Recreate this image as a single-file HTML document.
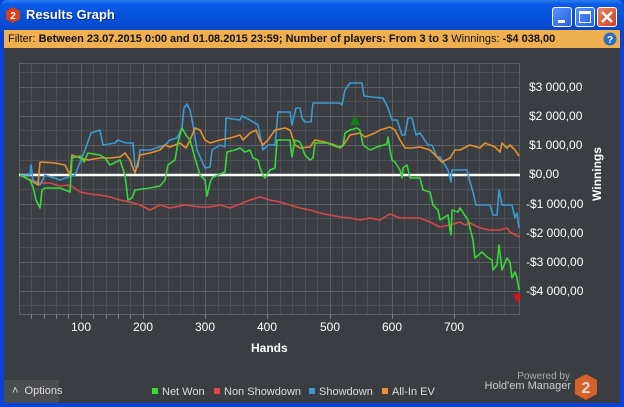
<!DOCTYPE html>
<html><head><meta charset="utf-8"><style>
*{margin:0;padding:0;box-sizing:border-box}
body{width:624px;height:407px;overflow:hidden;background:#0842d8;font-family:"Liberation Sans",sans-serif;position:relative}
.title{position:absolute;left:0;top:0;width:624px;height:30px;background:linear-gradient(#2a7cf0 0%,#0a5ae6 15%,#0450d8 60%,#0746c8 100%);border-radius:7px 7px 0 0}
.title span{position:absolute;left:26px;top:7px;color:#fff;font-size:13px;font-weight:bold;text-shadow:1px 1px #0a2a80}
.btn{position:absolute;top:7px;width:20px;height:20px;border:1px solid #fff;border-radius:3px;background:linear-gradient(135deg,#5a92ff,#2260e8)}
.body{position:absolute;left:4px;top:30px;width:616px;height:373px;background:#3a3d41}
.filter{position:absolute;left:4px;top:30px;width:616px;height:18px;background:#f0b050;font-size:11px;color:#111;line-height:18px;padding-left:4px;white-space:nowrap}
.yl{position:absolute;left:529px;color:#fff;font-size:12px;white-space:nowrap}
.xl{position:absolute;top:320px;color:#fff;font-size:12px;width:40px;text-align:center}
.leg{position:absolute;top:386px;font-size:11px;color:#ddd;white-space:nowrap}
.leg i{display:inline-block;width:6px;height:6px;margin-right:4px;vertical-align:1px}
</style></head><body>
<div class="title">
<svg style="position:absolute;left:6px;top:7px" width="14" height="16"><polygon points="7,0 14,4 14,12 7,16 0,12 0,4" fill="#d8401a"/><text x="7" y="12" text-anchor="middle" fill="#fff" font-size="10" font-weight="bold" font-family="Liberation Sans">2</text></svg>
<span>Results Graph</span>
<div class="btn" style="left:552px"><div style="position:absolute;left:5px;top:12px;width:7px;height:3px;background:#fff"></div></div>
<div class="btn" style="left:575px"><div style="position:absolute;left:3px;top:3px;width:12px;height:12px;border:1px solid #fff;border-top-width:3px"></div></div>
<div class="btn" style="left:597px;background:linear-gradient(135deg,#f08060,#d04020)"><svg width="18" height="18"><path d="M4 4L14 14M14 4L4 14" stroke="#fff" stroke-width="2.4"/></svg></div>
</div>
<div class="body"></div>
<div class="filter">Filter: <b>Between 23.07.2015 0:00 and 01.08.2015 23:59; Number of players: From 3 to 3</b> Winnings: <b>-$4 038,00</b></div>
<svg style="position:absolute;left:603px;top:32px" width="14" height="14"><circle cx="7" cy="7" r="6.5" fill="#2a6cc0"/><text x="7" y="11" text-anchor="middle" fill="#fff" font-size="10" font-weight="bold" font-family="Liberation Sans">?</text></svg>
<svg style="position:absolute;left:0;top:0" width="624" height="407">
<g stroke="#4c4f53" stroke-width="1">
<path d="M31.5 63V314M44.5 63V314M56.5 63V314M68.5 63V314M93.5 63V314M106.5 63V314M118.5 63V314M130.5 63V314M155.5 63V314M168.5 63V314M180.5 63V314M193.5 63V314M218.5 63V314M230.5 63V314M243.5 63V314M255.5 63V314M280.5 63V314M292.5 63V314M305.5 63V314M317.5 63V314M342.5 63V314M355.5 63V314M367.5 63V314M379.5 63V314M404.5 63V314M417.5 63V314M429.5 63V314M442.5 63V314M467.5 63V314M479.5 63V314M492.5 63V314M504.5 63V314"/>
<path d="M19 72.5H520M19 101.5H520M19 130.5H520M19 160.5H520M19 189.5H520M19 218.5H520M19 247.5H520M19 276.5H520M19 305.5H520"/>
</g>
<g stroke="#5c5f63" stroke-width="1">
<path d="M81.5 63V314M143.5 63V314M205.5 63V314M267.5 63V314M330.5 63V314M392.5 63V314M454.5 63V314"/>
<path d="M19 87.5H520M19 116.5H520M19 145.5H520M19 204.5H520M19 233.5H520M19 262.5H520M19 291.5H520"/>
<rect x="19.5" y="63.5" width="500" height="251" fill="none"/>
</g>
<g stroke="#7c8084" stroke-width="1"><path d="M31.5 314v5M44.5 314v5M56.5 314v5M68.5 314v5M81.5 314v5M93.5 314v5M106.5 314v5M118.5 314v5M130.5 314v5M143.5 314v5M205.5 314v5M267.5 314v5M330.5 314v5M392.5 314v5M454.5 314v5"/></g>
<line x1="19" y1="175" x2="520" y2="175" stroke="#fff" stroke-width="2.5"/>
<g fill="none" stroke-width="1.6" stroke-linejoin="round">
<polyline stroke="#d84848" points="20,175 30,180 40,183 50,183 60,186 70,185 80,192 90,194 100,195 110,197 120,200 130,202 140,205 150,210 160,205 170,208 185,205 200,207 210,207 220,205 230,208 240,204 250,200 260,197 270,200 280,202 290,205 300,208 310,210 320,213 330,215 340,217 350,218 360,220 370,218 380,220 390,214 400,218 410,218 420,218 430,222 440,227 450,225 460,222 465,225 470,223 480,228 490,230 500,230 507,228 510,232 519,237"/>
<polyline stroke="#3a9ad8" points="20,175 30,175 31,165 33,180 40,185 45,175 60,180 75,175 85,150 91,133 100,130 103,145 115,143 118,140 126,143 133,143 135,167 138,167 140,150 150,150 165,145 170,140 177,138 182,128 184,108 187,104 190,110 193,125 197,150 205,168 210,167 212,150 220,145 225,147 226,118 240,120 242,116 250,120 258,125 263,150 268,145 275,145 278,112 290,112 292,125 296,108 300,108 302,118 305,122 311,122 313,103 340,103 342,105 345,90 350,83 362,83 364,96 372,97 383,98 388,108 392,120 397,120 402,135 405,135 408,118 412,118 416,135 420,133 428,145 432,145 437,157 440,157 448,170 451,182 452,170 467,170 470,182 473,192 476,205 490,205 493,215 497,215 499,190 502,205 512,205 515,218 517,213 519,228"/>
<polyline stroke="#e8902c" points="20,175 30,180 38,185 40,162 55,163 65,165 70,175 72,155 80,158 88,160 100,158 110,158 120,157 125,153 130,160 135,173 140,155 150,153 160,150 165,145 170,147 180,143 186,148 190,140 195,128 200,130 205,140 210,143 220,140 230,138 240,135 243,140 250,133 256,130 260,140 263,145 268,140 275,130 285,128 290,130 295,145 300,148 310,147 315,140 325,142 335,145 340,148 345,143 350,135 360,133 365,137 370,135 375,133 380,130 390,127 395,130 400,140 405,148 412,148 420,147 430,150 435,155 442,162 450,158 455,150 460,150 470,145 480,148 485,143 495,147 500,152 502,143 507,148 510,145 515,150 519,156"/>
<polyline stroke="#38d838" points="20,175 30,180 33,187 36,200 40,208 42,190 45,188 60,188 70,192 72,158 80,156 84,162 88,153 100,155 105,158 110,165 120,160 125,175 128,200 132,198 135,190 150,188 160,186 165,180 168,165 175,160 178,142 182,128 186,135 190,140 195,158 200,175 205,180 207,196 210,183 212,178 218,175 225,172 227,152 235,150 240,148 245,152 250,150 253,158 258,160 260,168 263,175 265,178 270,170 275,168 277,140 290,140 292,157 295,140 300,142 305,155 310,160 313,158 315,143 327,143 337,147 343,146 345,133 350,130 357,128 360,130 363,145 370,150 377,147 387,144 388,137 390,150 392,160 395,162 400,170 402,178 403,168 407,165 410,178 420,178 423,190 430,192 433,205 438,210 440,220 448,215 450,230 451,235 452,210 458,212 460,208 468,220 473,240 475,258 482,252 487,257 492,260 493,270 497,265 499,245 502,270 507,258 510,262 512,278 515,272 517,278 519,290"/>
</g>
<polygon points="355,115 350,125 360,125" fill="#108010"/>
<polygon points="513,294 521,294 518,304" fill="#e01010"/>
</svg>
<div class="yl" style="top:80px">$3 000,00</div>
<div class="yl" style="top:109px">$2 000,00</div>
<div class="yl" style="top:138px">$1 000,00</div>
<div class="yl" style="top:167px">$0,00</div>
<div class="yl" style="top:197px;left:526px">-$1 000,00</div>
<div class="yl" style="top:226px;left:526px">-$2 000,00</div>
<div class="yl" style="top:255px;left:526px">-$3 000,00</div>
<div class="yl" style="top:284px;left:526px">-$4 000,00</div>
<div style="position:absolute;left:567px;top:167px;width:60px;text-align:center;transform:rotate(-90deg);color:#fff;font-size:12px;font-weight:bold">Winnings</div>
<div class="xl" style="left:61px">100</div>
<div class="xl" style="left:123px">200</div>
<div class="xl" style="left:185px">300</div>
<div class="xl" style="left:247px">400</div>
<div class="xl" style="left:310px">500</div>
<div class="xl" style="left:372px">600</div>
<div class="xl" style="left:434px">700</div>
<div style="position:absolute;left:251px;top:341px;color:#fff;font-size:12px;font-weight:bold">Hands</div>
<div style="position:absolute;left:4px;top:380px;width:55px;height:23px;background:#4a4c50;color:#ddd;font-size:11px;line-height:23px;padding-left:8px;white-space:nowrap">&#708;&nbsp;&nbsp;Options</div>
<div class="leg" style="left:152px"><i style="background:#30e030"></i>Net Won</div>
<div class="leg" style="left:214px"><i style="background:#e04848"></i>Non Showdown</div>
<div class="leg" style="left:309px"><i style="background:#3a9ad8"></i>Showdown</div>
<div class="leg" style="left:382px"><i style="background:#f09030"></i>All-In EV</div>
<div style="position:absolute;left:500px;top:371px;color:#aaa;font-size:10px;width:70px;text-align:right;white-space:nowrap">Powered by</div>
<div style="position:absolute;left:470px;top:380px;color:#ccc;font-size:11px;width:101px;text-align:right;white-space:nowrap">Hold'em Manager</div>
<svg style="position:absolute;left:575px;top:374px" width="22" height="26"><polygon points="11,0 22,6 22,20 11,26 0,20 0,6" fill="#d8602a"/><text x="11" y="19" text-anchor="middle" fill="#ddd" font-size="16" font-weight="bold" font-family="Liberation Sans">2</text></svg>
</body></html>
